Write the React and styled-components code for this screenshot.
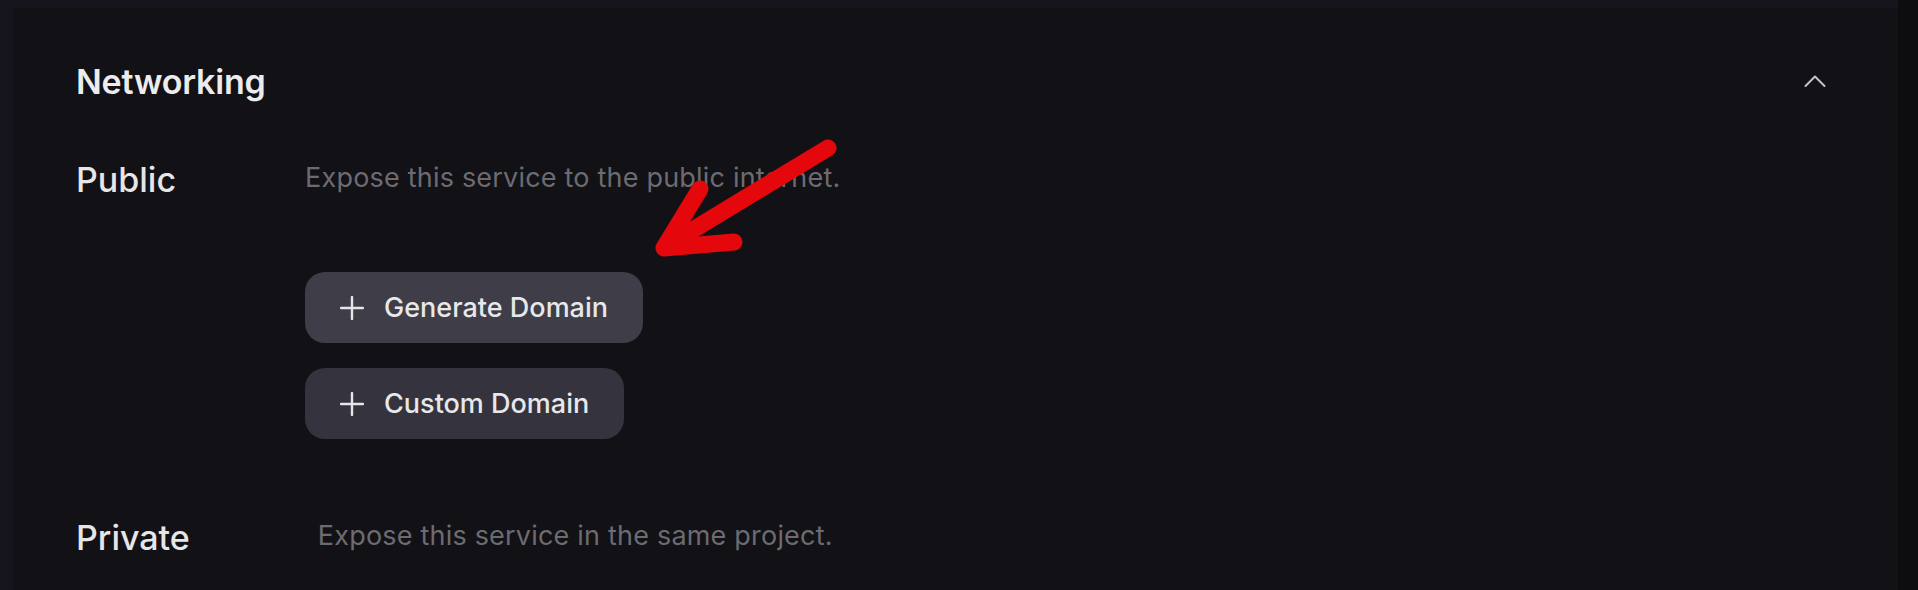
import styled, { createGlobalStyle } from "styled-components";

const GlobalStyle = createGlobalStyle`
  html, body {
    margin: 0;
    padding: 0;
    background: #0d0d0f;
    height: 590px;
    overflow: hidden;
  }
  body {
    font-family: Inter, "Noto Sans", sans-serif;
    -webkit-font-smoothing: antialiased;
  }
`;

const Page = styled.div`
  position: relative;
  width: 1918px;
  height: 590px;
  display: flex;
  background: #0d0d0f;
`;

const Frame = styled.div`
  width: 1898px;
  height: 590px;
  background: #16151d;
  padding: 8px 0 0 13px;
  box-sizing: border-box;
  display: flex;
`;

const Panel = styled.section`
  flex: 1;
  background: #121115;
  padding: 53px 72px 0 63px;
  box-sizing: border-box;
  display: flex;
  flex-direction: column;
`;

const Header = styled.div`
  display: flex;
  align-items: center;
  justify-content: space-between;
  height: 42px;
`;

const Title = styled.h2`
  margin: 0;
  font-size: 34px;
  line-height: 42px;
  font-weight: 600;
  color: #ececee;
  letter-spacing: -0.2px;
`;

const Toggle = styled.span`
  display: flex;
  align-items: center;
  justify-content: center;
  width: 22px;
  height: 14px;
  margin-top: -3px;
`;

const Row = styled.div`
  display: flex;
  align-items: flex-start;
  gap: ${(p) => p.$gap}px;
  margin-top: ${(p) => p.$top}px;
`;

const Label = styled.div`
  font-size: 34px;
  line-height: 42px;
  font-weight: 500;
  color: #e6e6e8;
`;

const Body = styled.div`
  display: flex;
  flex-direction: column;
  align-items: flex-start;
`;

const Description = styled.p`
  margin: 2px 0 0;
  font-size: 27px;
  line-height: 34px;
  letter-spacing: 0.2px;
  color: #6c6b72;
`;

const Actions = styled.div`
  display: flex;
  flex-direction: column;
  align-items: flex-start;
  gap: 25px;
  margin-top: 77px;
`;

const Button = styled.button`
  display: flex;
  align-items: center;
  gap: 20px;
  height: 71px;
  padding: 0 35px;
  border: none;
  border-radius: 20px;
  background: ${(p) => (p.$active ? "#3f3d47" : "#35333d")};
  color: #e8e8ea;
  font-family: inherit;
  font-size: 27px;
  font-weight: 500;
  cursor: pointer;
`;

const Annotation = styled.svg`
  position: absolute;
  left: 0;
  top: 0;
  pointer-events: none;
`;

const PlusIcon = () => (
  <svg width="24" height="24" viewBox="0 0 24 24">
    <path
      d="M12 1v22M1 12h22"
      stroke="#e6e6e8"
      strokeWidth="2.4"
      strokeLinecap="round"
    />
  </svg>
);

const ChevronUp = () => (
  <svg width="22" height="14" viewBox="0 0 22 14">
    <polyline
      points="1.5,12 11,2.5 20.5,12"
      fill="none"
      stroke="#c4c4c8"
      strokeWidth="2"
      strokeLinecap="round"
      strokeLinejoin="round"
    />
  </svg>
);

export default function App() {
  return (
    <>
      <GlobalStyle />
      <Page>
        <Frame>
          <Panel>
            <Header>
              <Title>Networking</Title>
              <Toggle>
                <ChevronUp />
              </Toggle>
            </Header>

            <Row $top={56} $gap={129}>
              <Label>Public</Label>
              <Body>
                <Description>Expose this service to the public internet.</Description>
                <Actions>
                  <Button $active>
                    <PlusIcon />
                    Generate Domain
                  </Button>
                  <Button>
                    <PlusIcon />
                    Custom Domain
                  </Button>
                </Actions>
              </Body>
            </Row>

            <Row $top={78} $gap={128}>
              <Label>Private</Label>
              <Description>Expose this service in the same project.</Description>
            </Row>
          </Panel>
        </Frame>
        {/* red arrow drawn over the screenshot */}
        <Annotation width="1918" height="590" viewBox="0 0 1918 590">
          <path
            d="M828 148 L668 245 M700 189 L664 248 L734 242"
            fill="none"
            stroke="#e4080c"
            strokeWidth="17"
            strokeLinecap="round"
            strokeLinejoin="round"
          />
        </Annotation>
      </Page>
    </>
  );
}
